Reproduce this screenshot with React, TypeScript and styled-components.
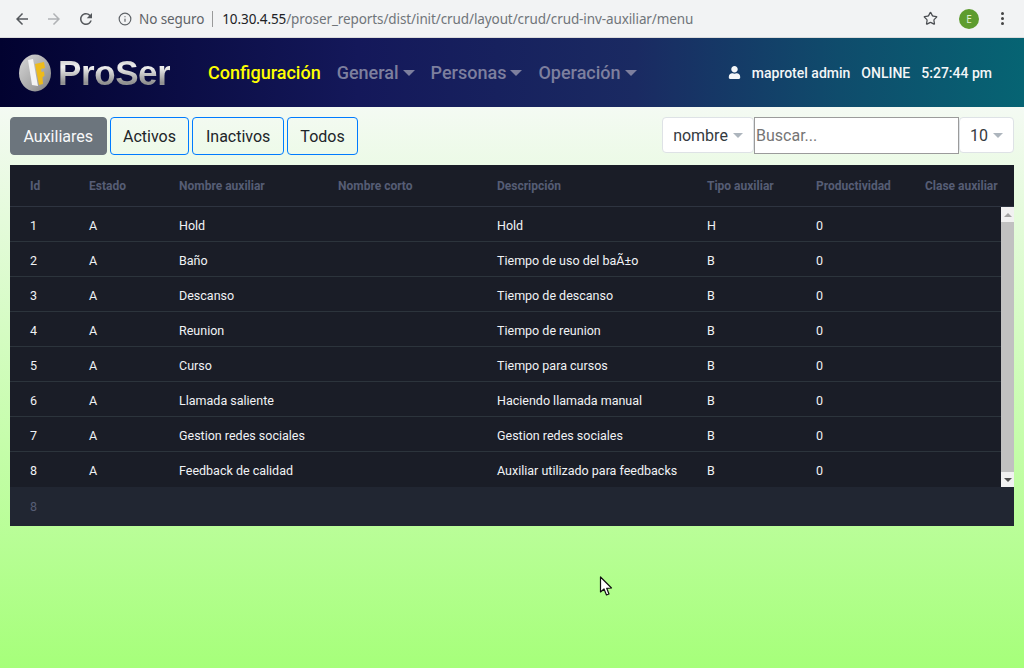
import styled, { createGlobalStyle } from 'styled-components';
import { Info, Star } from 'lucide-react';
import { FaUser } from 'react-icons/fa';

const GlobalStyle = createGlobalStyle`
	html, body {
		margin: 0;
		padding: 0;
		height: 100%;
		overflow: hidden;
	}
	body {
		font-family: Roboto, "Liberation Sans", sans-serif;
	}
	* {
		box-sizing: border-box;
	}
`;

const Page = styled.div`
	width: 1024px;
	height: 668px;
	display: flex;
	flex-direction: column;
	position: relative;
	overflow: hidden;
`;

const BrowserBar = styled.div`
	height: 38px;
	flex: none;
	display: flex;
	align-items: center;
	padding: 0 13px 0 13px;
	background: #f2f3f4;
	border-bottom: 1px solid #dcdcdc;
	font-family: "Noto Sans", "Open Sans", sans-serif;
`;

const ChromeButton = styled.span<{ $gap?: number }>`
	display: flex;
	width: 18px;
	height: 18px;
	flex: none;
	margin-right: ${(p) => p.$gap ?? 14}px;
`;

const Url = styled.div`
	display: flex;
	align-items: center;
	flex: 1;
	font-size: 13.5px;
	color: #70757a;
	white-space: nowrap;
	letter-spacing: -0.1px;
`;

const Secure = styled.span`
	margin-left: 7px;
	padding-right: 8px;
	margin-right: 9px;
	color: #5f6368;
	border-right: 1px solid #9a9a9a;
	line-height: 16px;
`;

const Host = styled.span`
	color: #202124;
`;

const Avatar = styled.span`
	width: 20px;
	height: 20px;
	border-radius: 50%;
	background: #5e9c2f;
	color: #dff0d0;
	font-size: 10px;
	display: flex;
	align-items: center;
	justify-content: center;
	margin: 0 22px 0 21px;
`;

const Dots = styled.span`
	display: flex;
	flex-direction: column;
	gap: 2px;
	margin-right: 7px;
	i {
		width: 3px;
		height: 3px;
		border-radius: 50%;
		background: #444;
	}
`;

const Navbar = styled.nav`
	height: 69px;
	flex: none;
	display: flex;
	align-items: center;
	padding: 0 32px 0 18px;
	background: linear-gradient(90deg, #020230 0%, #14185a 35%, #1a2a62 62%, #0f4c6c 82%, #066473 100%);
`;

const Brand = styled.div`
	display: flex;
	align-items: center;
	gap: 6px;
	width: 190px;
`;

const BrandName = styled.span`
	font-family: "Liberation Sans", sans-serif;
	font-size: 35px;
	font-weight: 700;
	letter-spacing: -0.4px;
	background: linear-gradient(180deg, #b0b0b0 0%, #f0f0f0 35%, #8f8f8f 75%, #bdbdbd 100%);
	-webkit-background-clip: text;
	background-clip: text;
	color: transparent;
`;

const NavItem = styled.span<{ $active?: boolean }>`
	font-size: 18px;
	font-weight: 500;
	color: ${(p) => (p.$active ? '#ffff00' : '#7d7f9e')};
	margin-right: 16px;
	display: flex;
	align-items: center;
	white-space: nowrap;
`;

const Caret = styled.i<{ $size?: number; $color?: string }>`
	display: inline-block;
	margin-left: ${(p) => (p.$size ? 5 : 4)}px;
	border-top: ${(p) => p.$size ?? 6}px solid ${(p) => p.$color ?? '#7d7f9e'};
	border-left: ${(p) => p.$size ?? 6}px solid transparent;
	border-right: ${(p) => p.$size ?? 6}px solid transparent;
`;

const UserArea = styled.div`
	margin-left: auto;
	display: flex;
	align-items: center;
	color: #f4f6f8;
	font-size: 14px;
	font-weight: 500;
	white-space: nowrap;
	span {
		margin-left: 11px;
	}
`;

const Main = styled.main`
	flex: 1;
	padding: 10px 10px 0;
	background: linear-gradient(180deg, #f4faf3 0%, #a6ff7a 100%);
`;

const Toolbar = styled.div`
	display: flex;
	align-items: flex-start;
	height: 38px;
`;

const Tab = styled.button<{ $active?: boolean; $gap?: number }>`
	height: 38px;
	padding: 0 12.5px;
	margin-right: ${(p) => p.$gap ?? 3}px;
	font-family: inherit;
	font-size: 16px;
	color: ${(p) => (p.$active ? '#f8f9fa' : '#212529')};
	background: ${(p) => (p.$active ? '#6c757d' : 'transparent')};
	border: 1px solid ${(p) => (p.$active ? '#6c757d' : '#007bff')};
	border-radius: 4px;
`;

const Search = styled.div`
	margin-left: auto;
	display: flex;
	height: 36px;
	margin-top: 0;
`;

const Dropdown = styled.div<{ $width: number }>`
	width: ${(p) => p.$width}px;
	height: 36px;
	display: flex;
	align-items: center;
	justify-content: center;
	background: #fff;
	border: 1px solid #dee2e6;
	border-radius: 4px;
	font-size: 16px;
	color: #343a40;
`;

const SearchInput = styled.input`
	width: 205px;
	height: 37px;
	padding: 0 1px;
	font-family: inherit;
	font-size: 16px;
	color: #333;
	background: #fff;
	border: 1px solid #9b9b9b;
	border-radius: 0;
	&::placeholder {
		color: #757575;
	}
`;

const Table = styled.div`
	margin-top: 10px;
	background: #1a1d27;
	height: 361px;
	display: flex;
	flex-direction: column;
`;

const columns = '59px 90px 159px 159px 210px 109px 109px 109px';

const HeadRow = styled.div`
	height: 42px;
	flex: none;
	display: grid;
	grid-template-columns: ${columns};
	align-items: center;
	border-bottom: 1px solid #2e3440;
`;

const HeadCell = styled.div`
	padding-left: 20px;
	font-size: 12px;
	font-weight: 700;
	color: #565d75;
	white-space: nowrap;
`;

const BodyArea = styled.div`
	height: 280px;
	flex: none;
	display: flex;
`;

const Rows = styled.div`
	flex: 1;
	min-width: 0;
`;

const Row = styled.div`
	height: 35px;
	display: grid;
	grid-template-columns: ${columns};
	align-items: center;
	border-bottom: 1px solid #2c343c;
	padding-top: 2px;
	&:last-child {
		border-bottom: none;
	}
`;

const Cell = styled.div`
	padding-left: 20px;
	font-size: 12.5px;
	color: #f0f2f5;
	white-space: nowrap;
`;

const Scrollbar = styled.div`
	width: 13px;
	flex: none;
	margin-right: 0;
	display: flex;
	flex-direction: column;
	background: #f1f1f1;
`;

const ScrollArrow = styled.div<{ $up?: boolean }>`
	height: 15px;
	flex: none;
	display: flex;
	align-items: center;
	justify-content: center;
	background: #f1f1f1;
	i {
		border-left: 4px solid transparent;
		border-right: 4px solid transparent;
		${(p) => (p.$up ? 'border-bottom: 4px solid #a3a3a3;' : 'border-top: 4px solid #505050;')}
	}
`;

const ScrollThumb = styled.div`
	flex: 1;
	background: #c1c1c1;
`;

const Footer = styled.div`
	flex: 1;
	display: flex;
	align-items: center;
	padding-left: 20px;
	background: #212632;
	color: #565d75;
	font-size: 12.5px;
`;

const Pointer = styled.svg`
	position: absolute;
	left: 599px;
	top: 576px;
`;

const rows = [
	['1', 'A', 'Hold', '', 'Hold', 'H', '0', ''],
	['2', 'A', 'Baño', '', 'Tiempo de uso del baÃ±o', 'B', '0', ''],
	['3', 'A', 'Descanso', '', 'Tiempo de descanso', 'B', '0', ''],
	['4', 'A', 'Reunion', '', 'Tiempo de reunion', 'B', '0', ''],
	['5', 'A', 'Curso', '', 'Tiempo para cursos', 'B', '0', ''],
	['6', 'A', 'Llamada saliente', '', 'Haciendo llamada manual', 'B', '0', ''],
	['7', 'A', 'Gestion redes sociales', '', 'Gestion redes sociales', 'B', '0', ''],
	['8', 'A', 'Feedback de calidad', '', 'Auxiliar utilizado para feedbacks', 'B', '0', ''],
];

const headers = ['Id', 'Estado', 'Nombre auxiliar', 'Nombre corto', 'Descripción', 'Tipo auxiliar', 'Productividad', 'Clase auxiliar'];

function LogoMark() {
	return (
		<svg width="34" height="38" viewBox="0 0 34 38">
			<defs>
				<linearGradient id="coin" x1="0" y1="0" x2="1" y2="1">
					<stop offset="0" stopColor="#d8d8d8" />
					<stop offset="0.6" stopColor="#a8a8a8" />
					<stop offset="1" stopColor="#7d7d7d" />
				</linearGradient>
			</defs>
			<ellipse cx="17" cy="19" rx="16" ry="18.5" fill="url(#coin)" />
			<path d="M10 6 L15 5 L20 32 L14 31 Z" fill="#f4f4f4" />
			<path d="M17 10 L26 8 L27 14 L23 15 L23.5 18 L26 17.5 L26.5 22 L24.5 23 L25 30 L21 31 Z" fill="#edbb1c" />
		</svg>
	);
}

export default function App() {
	return (
		<Page>
			<GlobalStyle />
			<BrowserBar>
				<ChromeButton>
					<svg width="18" height="18" viewBox="0 0 24 24" fill="#55585c">
						<path d="M20 11H7.83l5.59-5.59L12 4l-8 8 8 8 1.41-1.41L7.83 13H20v-2z" />
					</svg>
				</ChromeButton>
				<ChromeButton>
					<svg width="18" height="18" viewBox="0 0 24 24" fill="#b0b2b5">
						<path d="M4 11h12.17l-5.59-5.59L12 4l8 8-8 8-1.41-1.41L16.17 13H4v-2z" />
					</svg>
				</ChromeButton>
				<ChromeButton $gap={23}>
					<svg width="18" height="18" viewBox="0 0 24 24" fill="#55585c">
						<path d="M17.65 6.35A7.958 7.958 0 0 0 12 4c-4.42 0-7.99 3.58-7.99 8s3.57 8 7.99 8c3.73 0 6.84-2.55 7.73-6h-2.08A5.99 5.99 0 0 1 12 18c-3.31 0-6-2.69-6-6s2.69-6 6-6c1.66 0 3.14.69 4.22 1.78L13 11h7V4l-2.35 2.35z" />
					</svg>
				</ChromeButton>
				<Url>
					<Info size={14} color="#5f6368" />
					<Secure>No seguro</Secure>
					<Host>10.30.4.55</Host>/proser_reports/dist/init/crud/layout/crud/crud-inv-auxiliar/menu
				</Url>
				<Star size={15} color="#4a4d51" />
				<Avatar>E</Avatar>
				<Dots>
					<i />
					<i />
					<i />
				</Dots>
			</BrowserBar>
			<Navbar>
				<Brand>
					<LogoMark />
					<BrandName>ProSer</BrandName>
				</Brand>
				<NavItem $active>Configuración</NavItem>
				<NavItem>General<Caret /></NavItem>
				<NavItem>Personas<Caret /></NavItem>
				<NavItem>Operación<Caret /></NavItem>
				<UserArea>
					<FaUser size={13} />
					<span>maprotel admin</span>
					<span>ONLINE</span>
					<span>5:27:44 pm</span>
				</UserArea>
			</Navbar>
			<Main>
				<Toolbar>
					<Tab $active>Auxiliares</Tab>
					<Tab>Activos</Tab>
					<Tab>Inactivos</Tab>
					<Tab>Todos</Tab>
					<Search>
						<Dropdown $width={92}>nombre<Caret $size={5} $color="#adb5bd" /></Dropdown>
						<SearchInput placeholder="Buscar..." />
						<Dropdown $width={55}>10<Caret $size={5} $color="#adb5bd" /></Dropdown>
					</Search>
				</Toolbar>
				<Table>
					<HeadRow>
						{headers.map((h) => (
							<HeadCell key={h}>{h}</HeadCell>
						))}
					</HeadRow>
					<BodyArea>
						<Rows>
							{rows.map((r) => (
								<Row key={r[0]}>
									{r.map((c, i) => (
										<Cell key={i}>{c}</Cell>
									))}
								</Row>
							))}
						</Rows>
						<Scrollbar>
							<ScrollArrow $up><i /></ScrollArrow>
							<ScrollThumb />
							<ScrollArrow><i /></ScrollArrow>
						</Scrollbar>
					</BodyArea>
					<Footer>8</Footer>
				</Table>
			</Main>
			<Pointer width="14" height="22" viewBox="0 0 14 22">
				<path d="M1.5 1 L1.5 16 L5 13 L7.5 19 L10 18 L7.7 12.3 L12.5 12 Z" fill="#fff" stroke="#111" strokeWidth="1.2" strokeLinejoin="round" />
			</Pointer>
		</Page>
	);
}
